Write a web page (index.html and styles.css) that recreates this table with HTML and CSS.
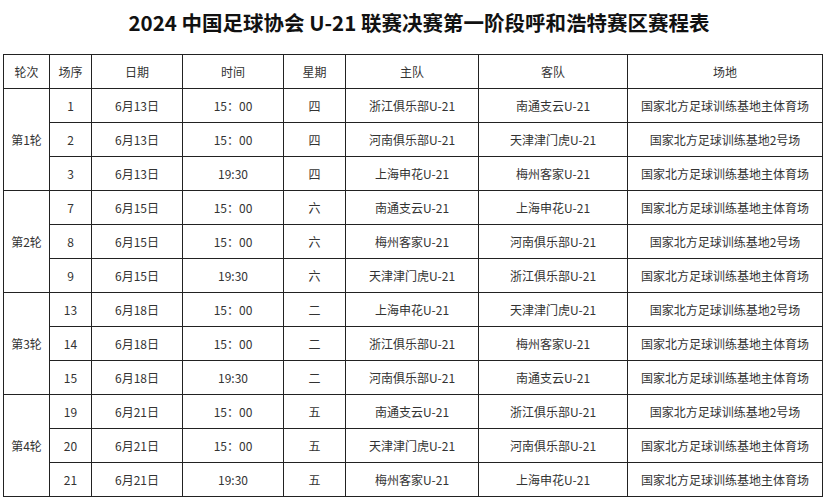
FILE: index.html
```html
<!DOCTYPE html>
<html lang="zh">
<head>
<meta charset="utf-8">
<link rel="stylesheet" href="styles.css">
</head>
<body>
<h1 class="title">2024 中国足球协会 U-21 联赛决赛第一阶段呼和浩特赛区赛程表</h1>
<table class="sched">
<colgroup>
<col class="c1"><col class="c2"><col class="c3"><col class="c4"><col class="c5"><col class="c6"><col class="c7"><col class="c8">
</colgroup>
<thead>
<tr><th>轮次</th><th>场序</th><th>日期</th><th>时间</th><th>星期</th><th>主队</th><th>客队</th><th>场地</th></tr>
</thead>
<tbody>
<tr><td rowspan="3">第1轮</td><td>1</td><td>6月13日</td><td>15：00</td><td>四</td><td>浙江俱乐部U-21</td><td>南通支云U-21</td><td>国家北方足球训练基地主体育场</td></tr>
<tr><td>2</td><td>6月13日</td><td>15：00</td><td>四</td><td>河南俱乐部U-21</td><td>天津津门虎U-21</td><td>国家北方足球训练基地2号场</td></tr>
<tr><td>3</td><td>6月13日</td><td>19:30</td><td>四</td><td>上海申花U-21</td><td>梅州客家U-21</td><td>国家北方足球训练基地主体育场</td></tr>
<tr><td rowspan="3">第2轮</td><td>7</td><td>6月15日</td><td>15：00</td><td>六</td><td>南通支云U-21</td><td>上海申花U-21</td><td>国家北方足球训练基地主体育场</td></tr>
<tr><td>8</td><td>6月15日</td><td>15：00</td><td>六</td><td>梅州客家U-21</td><td>河南俱乐部U-21</td><td>国家北方足球训练基地2号场</td></tr>
<tr><td>9</td><td>6月15日</td><td>19:30</td><td>六</td><td>天津津门虎U-21</td><td>浙江俱乐部U-21</td><td>国家北方足球训练基地主体育场</td></tr>
<tr><td rowspan="3">第3轮</td><td>13</td><td>6月18日</td><td>15：00</td><td>二</td><td>上海申花U-21</td><td>天津津门虎U-21</td><td>国家北方足球训练基地2号场</td></tr>
<tr><td>14</td><td>6月18日</td><td>15：00</td><td>二</td><td>浙江俱乐部U-21</td><td>梅州客家U-21</td><td>国家北方足球训练基地主体育场</td></tr>
<tr><td>15</td><td>6月18日</td><td>19:30</td><td>二</td><td>河南俱乐部U-21</td><td>南通支云U-21</td><td>国家北方足球训练基地主体育场</td></tr>
<tr><td rowspan="3">第4轮</td><td>19</td><td>6月21日</td><td>15：00</td><td>五</td><td>南通支云U-21</td><td>浙江俱乐部U-21</td><td>国家北方足球训练基地2号场</td></tr>
<tr><td>20</td><td>6月21日</td><td>15：00</td><td>五</td><td>天津津门虎U-21</td><td>河南俱乐部U-21</td><td>国家北方足球训练基地主体育场</td></tr>
<tr><td>21</td><td>6月21日</td><td>19:30</td><td>五</td><td>梅州客家U-21</td><td>上海申花U-21</td><td>国家北方足球训练基地主体育场</td></tr>
</tbody>
</table>
</body>
</html>
```
FILE: styles.css
```css
html, body {
  margin: 0;
  padding: 0;
  background: #fff;
}
body {
  font-family: "Noto Sans CJK SC", "Noto Sans", sans-serif;
  color: #333;
  padding-left: 3px;
}
.title {
  margin: 0;
  height: 54px;
  line-height: 44px;
  text-align: center;
  font-size: 20.5px;
  font-weight: 700;
  color: #111;
  width: 832px;
}
.sched {
  border-collapse: collapse;
  table-layout: fixed;
  width: 819px;
  font-size: 12px;
}
.sched th,
.sched td {
  border: 1.5px solid #222;
  height: 33px;
  padding: 0;
  text-align: center;
  vertical-align: middle;
  font-weight: 400;
  white-space: nowrap;
}
.c1 { width: 46px; }
.c2 { width: 42px; }
.c3 { width: 91px; }
.c4 { width: 101px; }
.c5 { width: 62px; }
.c6 { width: 133px; }
.c7 { width: 149px; }
.c8 { width: 195px; }
```
